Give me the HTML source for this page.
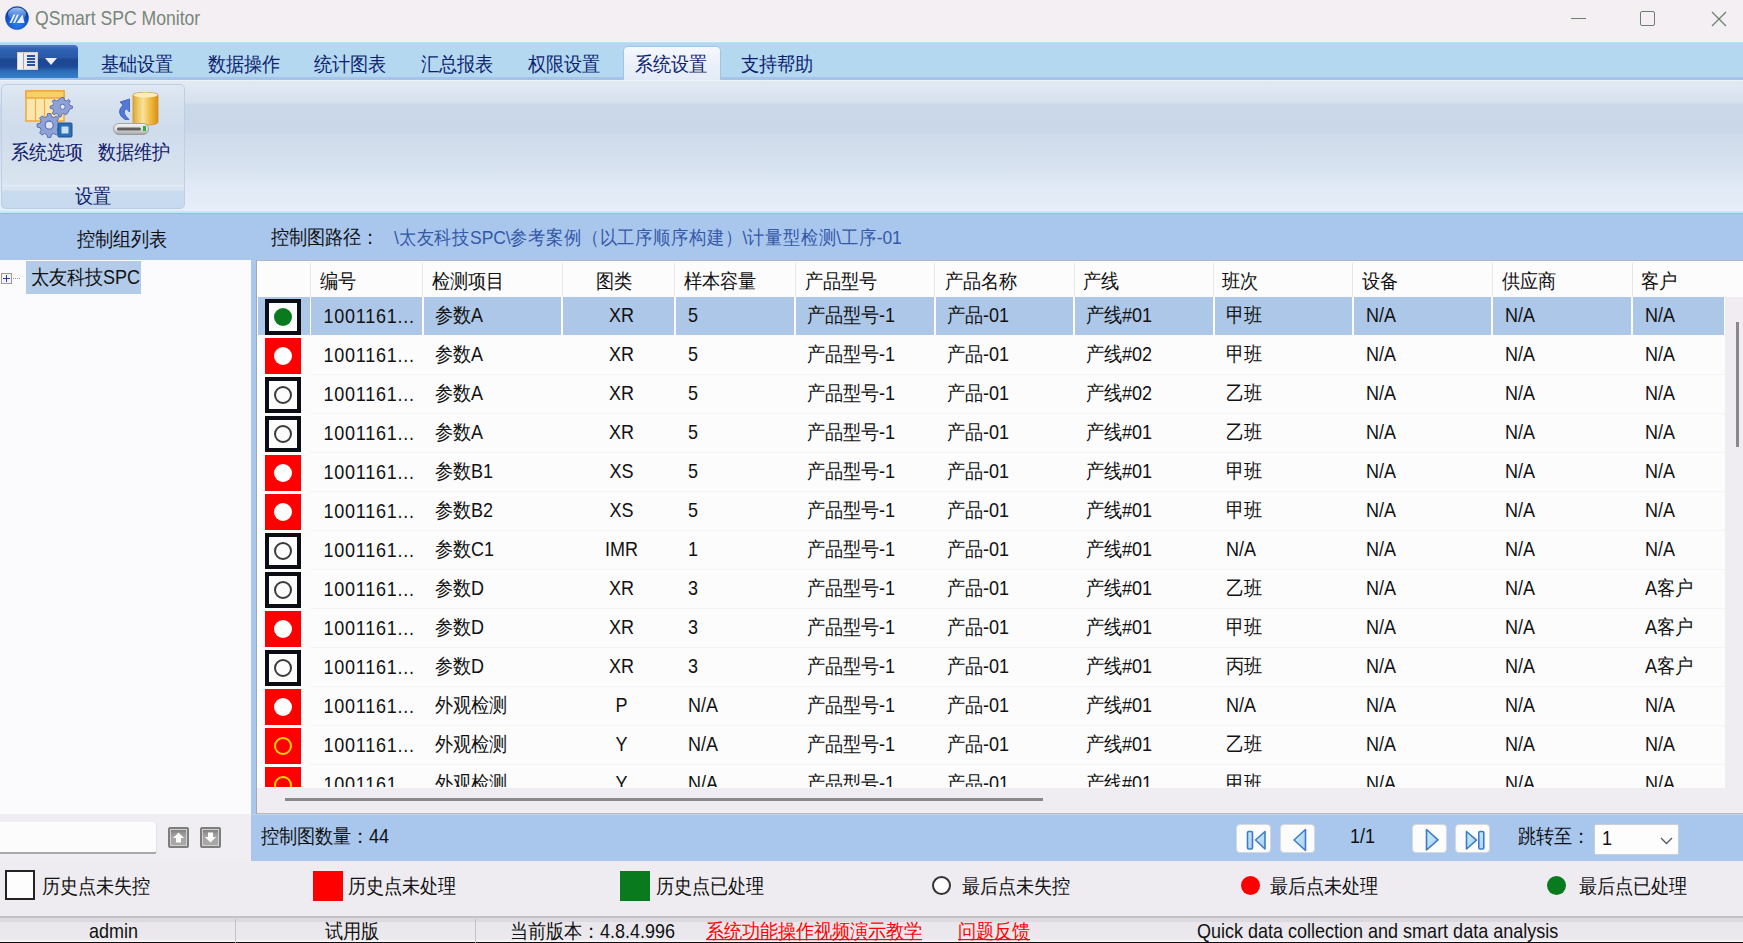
<!DOCTYPE html>
<html><head><meta charset="utf-8">
<style>
*{box-sizing:border-box}
html,body{margin:0;padding:0}
body{width:1743px;height:943px;overflow:hidden;position:relative;background:#f0eef2;font-family:"Liberation Sans",sans-serif;font-size:18px;color:#111}
.a{position:absolute}
.t{position:absolute;white-space:nowrap;line-height:20px;transform:scaleY(1.1);transform-origin:0 82%}
#title{left:0;top:0;width:1743px;height:42px;background:#f3eff3}
#menubar{left:0;top:42px;width:1743px;height:38px;background:#b4d8f0;border-top:1px solid #b2e6f4}
#menubar .bot{left:0;top:34px;width:1743px;height:3px;background:#a7c3ea}
.tab{color:#0e1f70;top:12px}
#ribbon{left:0;top:80px;width:1743px;height:133px;background:linear-gradient(#edf2f9 0px,#edf2f9 1px,#e2eaf4 1px,#d6e0ed 23px,#cbd8ea 24px,#cad7e9 53px,#cfdbeb 54px,#d8e3f0 90px,#e0e9f5 104px,#e6eef9 131px)}
#band{left:0;top:213px;width:1743px;height:47px;background:#a9c7ed;border-top:1px solid #a2b6d2}
#left{left:0;top:260px;width:251px;height:554px;background:#fbfbfd}
#split{left:251px;top:260px;width:6px;height:601px;background:#a9c7ed}
#grid{left:257px;top:260px;width:1486px;height:554px;background:#fcfcfd;overflow:hidden}
#leftbot{left:0;top:814px;width:251px;height:47px;background:#f0eef2}
#botbar{left:251px;top:814px;width:1492px;height:47px;background:#a9c7ed;border-top:1px solid #c4d2e6}
#legend{left:0;top:861px;width:1743px;height:54px;background:#efecf1}
#status{left:0;top:915px;width:1743px;height:28px;background:linear-gradient(#eeecf0 0,#eeecf0 1px,#c2c2c6 1px,#c2c2c6 3px,#dcdae0 3px,#dcdae0 7px,#e9e7eb 7px,#ebe9ed 24px,#f6f6f8 26px,#f6f6f8 27px,#0c0c0c 27px)}
</style></head><body>

<div id="title" class="a">
  <svg class="a" style="left:5px;top:6px" width="24" height="24" viewBox="0 0 24 24">
    <defs><radialGradient id="lg" cx="50%" cy="75%" r="60%"><stop offset="0" stop-color="#2a7ef0"/><stop offset="0.7" stop-color="#1458d0"/><stop offset="1" stop-color="#0a3a98"/></radialGradient>
    <linearGradient id="gl" x1="0" y1="0" x2="0" y2="1"><stop offset="0" stop-color="#b8d8ff" stop-opacity="0.9"/><stop offset="1" stop-color="#5a9af0" stop-opacity="0.3"/></linearGradient></defs>
    <circle cx="12" cy="12" r="11.6" fill="url(#lg)" stroke="#2050a0" stroke-width="0.4"/>
    <ellipse cx="12" cy="8" rx="9" ry="6.5" fill="url(#gl)"/>
    <path d="M4.5 17 L8.5 8.5 L10.5 8.5 L6.5 17Z M8 17 L12 8.5 L14 8.5 L10 17Z M11.5 17 L17.5 8.5 L19.5 17Z" fill="#f0f6ff" opacity="0.95"/>
  </svg>
  <div class="t" style="left:35px;top:9px;color:#778777;font-size:17.6px">QSmart SPC Monitor</div>
  <div class="a" style="left:1571px;top:18px;width:15px;height:1px;background:#6f7f6f"></div>
  <div class="a" style="left:1640px;top:11px;width:15px;height:15px;border:1.5px solid #6f7f6f;border-radius:2px"></div>
  <svg class="a" style="left:1711px;top:11px" width="16" height="16" viewBox="0 0 16 16"><path d="M1 1L15 15M15 1L1 15" stroke="#6f7f6f" stroke-width="1.3"/></svg>
</div>

<div id="menubar" class="a">
  <div class="a bot"></div>
  <div class="a" style="left:0;top:2px;width:78px;height:33px;border-radius:0 4px 0 0;background:linear-gradient(#4a7cc8 0,#2f62b4 4px,#2a5aa8 12px,#1c4690 15px,#1e4c98 22px,#2c6cb8 26px,#3480c8 33px)"></div>
  <div class="a" style="left:17px;top:9px;width:21px;height:18px;background:linear-gradient(90deg,#f4f4f4,#e0e0e0);border:1px solid #d0d0d0"></div>
  <div class="a" style="left:23px;top:10px;width:1px;height:16px;background:#9aa8c0"></div>
  <div class="a" style="left:27px;top:12px;width:8px;height:2px;background:#2850a0;box-shadow:0 3px 0 #2850a0,0 6px 0 #2850a0,0 9px 0 #2850a0"></div>
  <svg class="a" style="left:45px;top:15px" width="12" height="7" viewBox="0 0 12 7"><path d="M0 0H12L6 7Z" fill="#f0f0f0"/></svg>
  <div class="a" style="left:623px;top:3px;width:98px;height:35px;border:1px solid #a6c2ea;border-bottom:none;border-radius:5px 5px 0 0;background:linear-gradient(#f6f9fe 0,#eef3fb 10px,#e3ebf7 100%)"></div>
  <div class="t tab" style="left:101px">基础设置</div>
  <div class="t tab" style="left:208px">数据操作</div>
  <div class="t tab" style="left:314px">统计图表</div>
  <div class="t tab" style="left:421px">汇总报表</div>
  <div class="t tab" style="left:528px">权限设置</div>
  <div class="t tab" style="left:635px">系统设置</div>
  <div class="t tab" style="left:741px">支持帮助</div>
</div>

<div id="ribbon" class="a">
  <div class="a" style="left:1px;top:4px;width:184px;height:125px;border:1px solid #bccfe6;border-radius:5px;background:linear-gradient(#dfe8f3 0,#d5e0ee 25px,#cfdcec 45px,#d6e1ee 80px,#dae5f1 105px,#c9dbee 106px,#c6d9ee 100%)"></div>
  <div class="a" style="left:2px;top:105px;width:182px;height:1px;background:#e4ecf6"></div>
  <svg class="a" style="left:25px;top:10px" width="48" height="49" viewBox="0 0 48 49">
    <rect x="1" y="1" width="38" height="30" fill="#fbe7ad" stroke="#f0a838" stroke-width="1.5"/>
    <rect x="1" y="1" width="38" height="7" fill="#f8cf6a" stroke="#f0a838" stroke-width="1.5"/>
    <path d="M10.5 8V31M19.5 8V31" stroke="#f0b048" stroke-width="1.2"/>
    <g fill="#8ea2d8" stroke="#5d6eb2" stroke-width="1">
      <path id="g1" d="M36.6 7.5l2.2 0 .6 2.6 2 .9 2.3-1.4 1.6 1.6-1.4 2.3.9 2 2.6.6v2.2l-2.6.6-.9 2-1.4 2.3-1.6 1.6-2.3-1.4-2 .9-.6 2.6h-2.2l-.6-2.6-2-.9-2.3 1.4-1.6-1.6 1.4-2.3-.9-2-2.6-.6v-2.2l2.6-.6.9-2-1.4-2.3 1.6-1.6 2.3 1.4 2-.9z"/>
    </g>
    <circle cx="37.6" cy="16.8" r="2.6" fill="#dfe6f2" stroke="#5d6eb2" stroke-width="1"/>
    <g fill="#8ea2d8" stroke="#5d6eb2" stroke-width="1">
      <path d="M22.6 23.5h3.2l.7 3 2.4 1 2.6-1.6 2.3 2.3-1.6 2.6 1 2.4 3 .7v3.2l-3 .7-1 2.4 1.6 2.6-2.3 2.3-2.6-1.6-2.4 1-.7 3h-3.2l-.7-3-2.4-1-2.6 1.6-2.3-2.3 1.6-2.6-1-2.4-3-.7v-3.2l3-.7 1-2.4-1.6-2.6 2.3-2.3 2.6 1.6 2.4-1z"/>
    </g>
    <circle cx="24.2" cy="35.2" r="4" fill="#dfe6f2" stroke="#5d6eb2" stroke-width="1.2"/>
    <rect x="33" y="33" width="14" height="14" rx="1" fill="#2b6fb8" stroke="#1d5090" stroke-width="1"/>
    <rect x="36.5" y="36.5" width="7" height="7" fill="#c8e0f4"/>
  </svg>
  <svg class="a" style="left:112px;top:11px" width="48" height="46" viewBox="0 0 48 46">
    <defs><linearGradient id="cyl" x1="0" x2="1"><stop offset="0" stop-color="#e0a830"/><stop offset="0.4" stop-color="#f8e49a"/><stop offset="0.7" stop-color="#f0b840"/><stop offset="1" stop-color="#d89018"/></linearGradient>
    <linearGradient id="drv" x1="0" y1="0" x2="0" y2="1"><stop offset="0" stop-color="#f4f4f4"/><stop offset="0.6" stop-color="#d8d8d8"/><stop offset="1" stop-color="#a0a0a0"/></linearGradient></defs>
    <path d="M21 4Q21 1.5 33.5 1.5Q46 1.5 46 4V31Q46 34 33.5 34Q21 34 21 31Z" fill="url(#cyl)" stroke="#d09020" stroke-width="0.8"/>
    <ellipse cx="33.5" cy="4" rx="12" ry="2.5" fill="#fbeebb"/>
    <path d="M17.5 8V21L14 17.5Q9.5 22 17 28.5H13Q3 22 11 14L8 11Z" fill="#5578d8" stroke="#3050b0" stroke-width="0.7" stroke-linejoin="round"/>
    <rect x="1.5" y="32.5" width="35" height="11" rx="5.5" fill="url(#drv)" stroke="#909090" stroke-width="0.8"/>
    <rect x="5" y="36.5" width="24" height="3" rx="1.5" fill="#606060"/>
    <rect x="31" y="35" width="3" height="5" fill="#30b030"/>
  </svg>
  <div class="t" style="left:11px;top:63px;color:#10206a">系统选项</div>
  <div class="t" style="left:98px;top:63px;color:#10206a">数据维护</div>
  <div class="t" style="left:75px;top:107px;color:#10206a">设置</div>
  <div class="a" style="left:0;top:131px;width:1743px;height:2px;background:#b8ecf6"></div>
</div>
<div id="band" class="a">
  <div class="t" style="left:77px;top:16px;color:#111">控制组列表</div>
  <div class="t" style="left:271px;top:14px;color:#111">控制图路径：</div>
  <div class="t" style="left:394px;top:14px;color:#3458a8;font-size:17.5px;letter-spacing:-0.15px">\太友科技SPC\参考案例（以工序顺序构建）\计量型检测\工序-01</div>
</div>
<div id="left" class="a">
  <div class="a" style="left:1px;top:13px;width:11px;height:11px;border:1px solid #9a9a9a;background:#f4f4f4"></div>
  <div class="a" style="left:3px;top:18px;width:7px;height:1px;background:#2040a0"></div>
  <div class="a" style="left:6px;top:15px;width:1px;height:7px;background:#2040a0"></div>
  <div class="a" style="left:13px;top:18px;width:7px;height:0;border-top:1px dotted #999"></div>
  <div class="a" style="left:26px;top:1px;width:115px;height:33px;background:#b2cbe9"></div>
  <div class="t" style="left:31px;top:8px;color:#111">太友科技SPC</div>
</div>
<div id="split" class="a"><div class="a" style="left:5px;top:0;width:1px;height:554px;background:#a4a8b4"></div></div>
<div id="grid" class="a">
<div class="a" style="left:0;top:0;width:1486px;height:1px;background:#b4b8c4"></div>
<div class="a" style="left:52.5px;top:3px;width:1px;height:34px;background:#e6e6ea"></div>
<div class="a" style="left:165.0px;top:3px;width:1px;height:34px;background:#e6e6ea"></div>
<div class="a" style="left:304.5px;top:3px;width:1px;height:34px;background:#e6e6ea"></div>
<div class="a" style="left:417.0px;top:3px;width:1px;height:34px;background:#e6e6ea"></div>
<div class="a" style="left:537.5px;top:3px;width:1px;height:34px;background:#e6e6ea"></div>
<div class="a" style="left:677.0px;top:3px;width:1px;height:34px;background:#e6e6ea"></div>
<div class="a" style="left:816.5px;top:3px;width:1px;height:34px;background:#e6e6ea"></div>
<div class="a" style="left:956.0px;top:3px;width:1px;height:34px;background:#e6e6ea"></div>
<div class="a" style="left:1095.0px;top:3px;width:1px;height:34px;background:#e6e6ea"></div>
<div class="a" style="left:1234.5px;top:3px;width:1px;height:34px;background:#e6e6ea"></div>
<div class="a" style="left:1374.5px;top:3px;width:1px;height:34px;background:#e6e6ea"></div>
<div class="t" style="left:63px;top:12px">编号</div>
<div class="t" style="left:175px;top:12px">检测项目</div>
<div class="t" style="left:339px;top:12px">图类</div>
<div class="t" style="left:427px;top:12px">样本容量</div>
<div class="t" style="left:548px;top:12px">产品型号</div>
<div class="t" style="left:688px;top:12px">产品名称</div>
<div class="t" style="left:826px;top:12px">产线</div>
<div class="t" style="left:965px;top:12px">班次</div>
<div class="t" style="left:1105px;top:12px">设备</div>
<div class="t" style="left:1245px;top:12px">供应商</div>
<div class="t" style="left:1384px;top:12px">客户</div>
<div class="a" style="left:0;top:37px;width:1468px;height:490px;overflow:hidden">
<div class="a" style="left:1.0px;top:0px;width:51.5px;height:38px;background:#adc7e8"></div>
<div class="a" style="left:54.0px;top:0px;width:110.5px;height:38px;background:#adc7e8"></div>
<div class="a" style="left:166.5px;top:0px;width:137.5px;height:38px;background:#adc7e8"></div>
<div class="a" style="left:306.0px;top:0px;width:110.5px;height:38px;background:#adc7e8"></div>
<div class="a" style="left:418.5px;top:0px;width:118.5px;height:38px;background:#adc7e8"></div>
<div class="a" style="left:539.0px;top:0px;width:137.5px;height:38px;background:#adc7e8"></div>
<div class="a" style="left:678.5px;top:0px;width:137.5px;height:38px;background:#adc7e8"></div>
<div class="a" style="left:818.0px;top:0px;width:137.5px;height:38px;background:#adc7e8"></div>
<div class="a" style="left:957.5px;top:0px;width:137.0px;height:38px;background:#adc7e8"></div>
<div class="a" style="left:1096.5px;top:0px;width:137.5px;height:38px;background:#adc7e8"></div>
<div class="a" style="left:1236.0px;top:0px;width:138.0px;height:38px;background:#adc7e8"></div>
<div class="a" style="left:1376.0px;top:0px;width:91.0px;height:38px;background:#adc7e8"></div>
<div class="a" style="left:8px;top:2px;width:36px;height:36px;border:4px solid #0c0c14;background:#fdfdfd"></div>
<div class="a" style="left:17px;top:11px;width:18px;height:18px;border-radius:50%;background:#0a7a1e"></div>
<div class="t" style="left:66.5px;top:10px;letter-spacing:0.75px">1001161...</div>
<div class="t" style="left:178px;top:9px">参数A</div>
<div class="t" style="left:314px;width:101px;text-align:center;top:9px">XR</div>
<div class="t" style="left:431px;top:9px">5</div>
<div class="t" style="left:550px;top:9px">产品型号-1</div>
<div class="t" style="left:690px;top:9px">产品-01</div>
<div class="t" style="left:829px;top:9px">产线#01</div>
<div class="t" style="left:969px;top:9px">甲班</div>
<div class="t" style="left:1109px;top:9px">N/A</div>
<div class="t" style="left:1248px;top:9px">N/A</div>
<div class="t" style="left:1388px;top:9px">N/A</div>
<div class="a" style="left:53px;top:77px;width:1415px;height:1px;background:#f5f5f7"></div>
<div class="a" style="left:8px;top:41px;width:36px;height:36px;background:#fe0000"></div>
<div class="a" style="left:17px;top:50px;width:18px;height:18px;border-radius:50%;background:#fff"></div>
<div class="t" style="left:66.5px;top:49px;letter-spacing:0.75px">1001161...</div>
<div class="t" style="left:178px;top:48px">参数A</div>
<div class="t" style="left:314px;width:101px;text-align:center;top:48px">XR</div>
<div class="t" style="left:431px;top:48px">5</div>
<div class="t" style="left:550px;top:48px">产品型号-1</div>
<div class="t" style="left:690px;top:48px">产品-01</div>
<div class="t" style="left:829px;top:48px">产线#02</div>
<div class="t" style="left:969px;top:48px">甲班</div>
<div class="t" style="left:1109px;top:48px">N/A</div>
<div class="t" style="left:1248px;top:48px">N/A</div>
<div class="t" style="left:1388px;top:48px">N/A</div>
<div class="a" style="left:53px;top:116px;width:1415px;height:1px;background:#f5f5f7"></div>
<div class="a" style="left:8px;top:80px;width:36px;height:36px;border:4px solid #0c0c14;background:#fdfdfd"></div>
<div class="a" style="left:17px;top:89px;width:18px;height:18px;border-radius:50%;border:2px solid #3a3a3a"></div>
<div class="t" style="left:66.5px;top:88px;letter-spacing:0.75px">1001161...</div>
<div class="t" style="left:178px;top:87px">参数A</div>
<div class="t" style="left:314px;width:101px;text-align:center;top:87px">XR</div>
<div class="t" style="left:431px;top:87px">5</div>
<div class="t" style="left:550px;top:87px">产品型号-1</div>
<div class="t" style="left:690px;top:87px">产品-01</div>
<div class="t" style="left:829px;top:87px">产线#02</div>
<div class="t" style="left:969px;top:87px">乙班</div>
<div class="t" style="left:1109px;top:87px">N/A</div>
<div class="t" style="left:1248px;top:87px">N/A</div>
<div class="t" style="left:1388px;top:87px">N/A</div>
<div class="a" style="left:53px;top:155px;width:1415px;height:1px;background:#f5f5f7"></div>
<div class="a" style="left:8px;top:119px;width:36px;height:36px;border:4px solid #0c0c14;background:#fdfdfd"></div>
<div class="a" style="left:17px;top:128px;width:18px;height:18px;border-radius:50%;border:2px solid #3a3a3a"></div>
<div class="t" style="left:66.5px;top:127px;letter-spacing:0.75px">1001161...</div>
<div class="t" style="left:178px;top:126px">参数A</div>
<div class="t" style="left:314px;width:101px;text-align:center;top:126px">XR</div>
<div class="t" style="left:431px;top:126px">5</div>
<div class="t" style="left:550px;top:126px">产品型号-1</div>
<div class="t" style="left:690px;top:126px">产品-01</div>
<div class="t" style="left:829px;top:126px">产线#01</div>
<div class="t" style="left:969px;top:126px">乙班</div>
<div class="t" style="left:1109px;top:126px">N/A</div>
<div class="t" style="left:1248px;top:126px">N/A</div>
<div class="t" style="left:1388px;top:126px">N/A</div>
<div class="a" style="left:53px;top:194px;width:1415px;height:1px;background:#f5f5f7"></div>
<div class="a" style="left:8px;top:158px;width:36px;height:36px;background:#fe0000"></div>
<div class="a" style="left:17px;top:167px;width:18px;height:18px;border-radius:50%;background:#fff"></div>
<div class="t" style="left:66.5px;top:166px;letter-spacing:0.75px">1001161...</div>
<div class="t" style="left:178px;top:165px">参数B1</div>
<div class="t" style="left:314px;width:101px;text-align:center;top:165px">XS</div>
<div class="t" style="left:431px;top:165px">5</div>
<div class="t" style="left:550px;top:165px">产品型号-1</div>
<div class="t" style="left:690px;top:165px">产品-01</div>
<div class="t" style="left:829px;top:165px">产线#01</div>
<div class="t" style="left:969px;top:165px">甲班</div>
<div class="t" style="left:1109px;top:165px">N/A</div>
<div class="t" style="left:1248px;top:165px">N/A</div>
<div class="t" style="left:1388px;top:165px">N/A</div>
<div class="a" style="left:53px;top:233px;width:1415px;height:1px;background:#f5f5f7"></div>
<div class="a" style="left:8px;top:197px;width:36px;height:36px;background:#fe0000"></div>
<div class="a" style="left:17px;top:206px;width:18px;height:18px;border-radius:50%;background:#fff"></div>
<div class="t" style="left:66.5px;top:205px;letter-spacing:0.75px">1001161...</div>
<div class="t" style="left:178px;top:204px">参数B2</div>
<div class="t" style="left:314px;width:101px;text-align:center;top:204px">XS</div>
<div class="t" style="left:431px;top:204px">5</div>
<div class="t" style="left:550px;top:204px">产品型号-1</div>
<div class="t" style="left:690px;top:204px">产品-01</div>
<div class="t" style="left:829px;top:204px">产线#01</div>
<div class="t" style="left:969px;top:204px">甲班</div>
<div class="t" style="left:1109px;top:204px">N/A</div>
<div class="t" style="left:1248px;top:204px">N/A</div>
<div class="t" style="left:1388px;top:204px">N/A</div>
<div class="a" style="left:53px;top:272px;width:1415px;height:1px;background:#f5f5f7"></div>
<div class="a" style="left:8px;top:236px;width:36px;height:36px;border:4px solid #0c0c14;background:#fdfdfd"></div>
<div class="a" style="left:17px;top:245px;width:18px;height:18px;border-radius:50%;border:2px solid #3a3a3a"></div>
<div class="t" style="left:66.5px;top:244px;letter-spacing:0.75px">1001161...</div>
<div class="t" style="left:178px;top:243px">参数C1</div>
<div class="t" style="left:314px;width:101px;text-align:center;top:243px">IMR</div>
<div class="t" style="left:431px;top:243px">1</div>
<div class="t" style="left:550px;top:243px">产品型号-1</div>
<div class="t" style="left:690px;top:243px">产品-01</div>
<div class="t" style="left:829px;top:243px">产线#01</div>
<div class="t" style="left:969px;top:243px">N/A</div>
<div class="t" style="left:1109px;top:243px">N/A</div>
<div class="t" style="left:1248px;top:243px">N/A</div>
<div class="t" style="left:1388px;top:243px">N/A</div>
<div class="a" style="left:53px;top:311px;width:1415px;height:1px;background:#f5f5f7"></div>
<div class="a" style="left:8px;top:275px;width:36px;height:36px;border:4px solid #0c0c14;background:#fdfdfd"></div>
<div class="a" style="left:17px;top:284px;width:18px;height:18px;border-radius:50%;border:2px solid #3a3a3a"></div>
<div class="t" style="left:66.5px;top:283px;letter-spacing:0.75px">1001161...</div>
<div class="t" style="left:178px;top:282px">参数D</div>
<div class="t" style="left:314px;width:101px;text-align:center;top:282px">XR</div>
<div class="t" style="left:431px;top:282px">3</div>
<div class="t" style="left:550px;top:282px">产品型号-1</div>
<div class="t" style="left:690px;top:282px">产品-01</div>
<div class="t" style="left:829px;top:282px">产线#01</div>
<div class="t" style="left:969px;top:282px">乙班</div>
<div class="t" style="left:1109px;top:282px">N/A</div>
<div class="t" style="left:1248px;top:282px">N/A</div>
<div class="t" style="left:1388px;top:282px">A客户</div>
<div class="a" style="left:53px;top:350px;width:1415px;height:1px;background:#f5f5f7"></div>
<div class="a" style="left:8px;top:314px;width:36px;height:36px;background:#fe0000"></div>
<div class="a" style="left:17px;top:323px;width:18px;height:18px;border-radius:50%;background:#fff"></div>
<div class="t" style="left:66.5px;top:322px;letter-spacing:0.75px">1001161...</div>
<div class="t" style="left:178px;top:321px">参数D</div>
<div class="t" style="left:314px;width:101px;text-align:center;top:321px">XR</div>
<div class="t" style="left:431px;top:321px">3</div>
<div class="t" style="left:550px;top:321px">产品型号-1</div>
<div class="t" style="left:690px;top:321px">产品-01</div>
<div class="t" style="left:829px;top:321px">产线#01</div>
<div class="t" style="left:969px;top:321px">甲班</div>
<div class="t" style="left:1109px;top:321px">N/A</div>
<div class="t" style="left:1248px;top:321px">N/A</div>
<div class="t" style="left:1388px;top:321px">A客户</div>
<div class="a" style="left:53px;top:389px;width:1415px;height:1px;background:#f5f5f7"></div>
<div class="a" style="left:8px;top:353px;width:36px;height:36px;border:4px solid #0c0c14;background:#fdfdfd"></div>
<div class="a" style="left:17px;top:362px;width:18px;height:18px;border-radius:50%;border:2px solid #3a3a3a"></div>
<div class="t" style="left:66.5px;top:361px;letter-spacing:0.75px">1001161...</div>
<div class="t" style="left:178px;top:360px">参数D</div>
<div class="t" style="left:314px;width:101px;text-align:center;top:360px">XR</div>
<div class="t" style="left:431px;top:360px">3</div>
<div class="t" style="left:550px;top:360px">产品型号-1</div>
<div class="t" style="left:690px;top:360px">产品-01</div>
<div class="t" style="left:829px;top:360px">产线#01</div>
<div class="t" style="left:969px;top:360px">丙班</div>
<div class="t" style="left:1109px;top:360px">N/A</div>
<div class="t" style="left:1248px;top:360px">N/A</div>
<div class="t" style="left:1388px;top:360px">A客户</div>
<div class="a" style="left:53px;top:428px;width:1415px;height:1px;background:#f5f5f7"></div>
<div class="a" style="left:8px;top:392px;width:36px;height:36px;background:#fe0000"></div>
<div class="a" style="left:17px;top:401px;width:18px;height:18px;border-radius:50%;background:#fff"></div>
<div class="t" style="left:66.5px;top:400px;letter-spacing:0.75px">1001161...</div>
<div class="t" style="left:178px;top:399px">外观检测</div>
<div class="t" style="left:314px;width:101px;text-align:center;top:399px">P</div>
<div class="t" style="left:431px;top:399px">N/A</div>
<div class="t" style="left:550px;top:399px">产品型号-1</div>
<div class="t" style="left:690px;top:399px">产品-01</div>
<div class="t" style="left:829px;top:399px">产线#01</div>
<div class="t" style="left:969px;top:399px">N/A</div>
<div class="t" style="left:1109px;top:399px">N/A</div>
<div class="t" style="left:1248px;top:399px">N/A</div>
<div class="t" style="left:1388px;top:399px">N/A</div>
<div class="a" style="left:53px;top:467px;width:1415px;height:1px;background:#f5f5f7"></div>
<div class="a" style="left:8px;top:431px;width:36px;height:36px;background:#fe0000"></div>
<div class="a" style="left:17px;top:440px;width:18px;height:18px;border-radius:50%;border:2px solid #fad400"></div>
<div class="t" style="left:66.5px;top:439px;letter-spacing:0.75px">1001161...</div>
<div class="t" style="left:178px;top:438px">外观检测</div>
<div class="t" style="left:314px;width:101px;text-align:center;top:438px">Y</div>
<div class="t" style="left:431px;top:438px">N/A</div>
<div class="t" style="left:550px;top:438px">产品型号-1</div>
<div class="t" style="left:690px;top:438px">产品-01</div>
<div class="t" style="left:829px;top:438px">产线#01</div>
<div class="t" style="left:969px;top:438px">乙班</div>
<div class="t" style="left:1109px;top:438px">N/A</div>
<div class="t" style="left:1248px;top:438px">N/A</div>
<div class="t" style="left:1388px;top:438px">N/A</div>
<div class="a" style="left:53px;top:506px;width:1415px;height:1px;background:#f5f5f7"></div>
<div class="a" style="left:8px;top:470px;width:36px;height:36px;background:#fe0000"></div>
<div class="a" style="left:17px;top:479px;width:18px;height:18px;border-radius:50%;border:2px solid #fad400"></div>
<div class="t" style="left:66.5px;top:478px;letter-spacing:0.75px">1001161...</div>
<div class="t" style="left:178px;top:477px">外观检测</div>
<div class="t" style="left:314px;width:101px;text-align:center;top:477px">Y</div>
<div class="t" style="left:431px;top:477px">N/A</div>
<div class="t" style="left:550px;top:477px">产品型号-1</div>
<div class="t" style="left:690px;top:477px">产品-01</div>
<div class="t" style="left:829px;top:477px">产线#01</div>
<div class="t" style="left:969px;top:477px">甲班</div>
<div class="t" style="left:1109px;top:477px">N/A</div>
<div class="t" style="left:1248px;top:477px">N/A</div>
<div class="t" style="left:1388px;top:477px">N/A</div>
</div>
<div class="a" style="left:1468px;top:37px;width:18px;height:491px;background:#efedf1"></div>
<div class="a" style="left:1479px;top:62px;width:3px;height:125px;background:#8a8a8a"></div>
<div class="a" style="left:0;top:528px;width:1486px;height:25px;background:#f0edf2"></div>
<div class="a" style="left:28px;top:538px;width:758px;height:3px;background:#8a8a8a"></div>
<div class="a" style="left:0;top:553px;width:1486px;height:1px;background:#b8b8c0"></div>
</div>
<div id="leftbot" class="a">
  <div class="a" style="left:0;top:8px;width:157px;height:32px;background:#fdfcfd;border-bottom:2px solid #a8a8ac;border-right:1px solid #e4e4e8;border-radius:0 3px 3px 0"></div>
  <div class="a" style="left:168px;top:13px;width:21px;height:21px;border:2px solid #7e7e7e;border-radius:2px;background:linear-gradient(#7c7c7c,#a6a6a6 45%,#a8a8a8);box-shadow:inset 0 0 0 1px #d0d0d0"></div>
  <svg class="a" style="left:172px;top:17px" width="13" height="13" viewBox="0 0 13 13"><path d="M6.5 1.5L12 7H9V11.5H4V7H1Z" fill="#fff"/></svg>
  <div class="a" style="left:200px;top:13px;width:21px;height:21px;border:2px solid #7e7e7e;border-radius:2px;background:linear-gradient(#7c7c7c,#a6a6a6 45%,#a8a8a8);box-shadow:inset 0 0 0 1px #d0d0d0"></div>
  <svg class="a" style="left:204px;top:17px" width="13" height="13" viewBox="0 0 13 13"><path d="M6.5 11.5L12 6H9V1.5H4V6H1Z" fill="#fff"/></svg>
</div>
<div id="botbar" class="a">
  <div class="t" style="left:10px;top:12px;color:#111">控制图数量：44</div>
  <div class="a" style="left:985px;top:9px;width:35px;height:29px;border:1px solid #d4d8e0;border-radius:4px;background:#fcfcfd"></div><div class="a" style="left:1029px;top:9px;width:35px;height:29px;border:1px solid #d4d8e0;border-radius:4px;background:#fcfcfd"></div><div class="a" style="left:1161px;top:9px;width:35px;height:29px;border:1px solid #d4d8e0;border-radius:4px;background:#fcfcfd"></div><div class="a" style="left:1204px;top:9px;width:35px;height:29px;border:1px solid #d4d8e0;border-radius:4px;background:#fcfcfd"></div>
  <svg class="a" style="left:0;top:0" width="1492" height="47" viewBox="0 0 1492 47">
  <defs><linearGradient id="pg" x1="0" y1="0" x2="1" y2="1"><stop offset="0" stop-color="#c8ecf8"/><stop offset="1" stop-color="#a8d0f0"/></linearGradient></defs>
  <g fill="url(#pg)" stroke="#3f7cc8" stroke-width="1.6" stroke-linejoin="round">
    <rect x="996.5" y="16.5" width="5" height="17.5" rx="1.2"/>
    <path d="M1004.5 25L1014 16.5V34Z"/>
    <path d="M1043 25L1054.5 14.5V35.5Z"/>
    <path d="M1175.5 14.5V35L1187 24.8Z"/>
    <path d="M1215.5 16.5V34L1225.5 25.2Z"/>
    <rect x="1227.8" y="16.5" width="5" height="17.5" rx="1.2"/>
  </g>
</svg>
  <div class="t" style="left:1099px;top:12px;color:#111">1/1</div>
  <div class="t" style="left:1267px;top:12px;color:#111">跳转至：</div>
  <div class="a" style="left:1343px;top:9px;width:85px;height:31px;background:#fdfdfd;border:1px solid #c4cedc;border-radius:2px"></div>
  <div class="t" style="left:1351px;top:14px;color:#111">1</div>
  <svg class="a" style="left:1409px;top:22px" width="13" height="8" viewBox="0 0 13 8"><path d="M1 1L6.5 6.5L12 1" fill="none" stroke="#505860" stroke-width="1.3"/></svg>
</div>
<div id="legend" class="a">
  <div class="a" style="left:5px;top:9px;width:30px;height:30px;border:2px solid #222;background:#fdfdfd"></div>
  <div class="t" style="left:42px;top:16px">历史点未失控</div>
  <div class="a" style="left:313px;top:10px;width:30px;height:30px;background:#fe0000"></div>
  <div class="t" style="left:348px;top:16px">历史点未处理</div>
  <div class="a" style="left:620px;top:10px;width:30px;height:30px;background:#0a7a1e"></div>
  <div class="t" style="left:656px;top:16px">历史点已处理</div>
  <div class="a" style="left:931.5px;top:15px;width:19px;height:19px;border-radius:50%;border:2px solid #333;background:#fdfdfd"></div>
  <div class="t" style="left:962px;top:16px">最后点未失控</div>
  <div class="a" style="left:1241px;top:15px;width:19px;height:19px;border-radius:50%;background:#fe0000"></div>
  <div class="t" style="left:1270px;top:16px">最后点未处理</div>
  <div class="a" style="left:1547px;top:15px;width:19px;height:19px;border-radius:50%;background:#0a7a1e"></div>
  <div class="t" style="left:1579px;top:16px">最后点已处理</div>
</div>
<div id="status" class="a">
  <div class="t" style="left:89px;top:7px">admin</div>
  <div class="a" style="left:235px;top:4px;width:1px;height:24px;background:#c4c4c8"></div>
  <div class="t" style="left:325px;top:7px">试用版</div>
  <div class="a" style="left:475px;top:4px;width:1px;height:24px;background:#c4c4c8"></div>
  <div class="t" style="left:510px;top:7px">当前版本：4.8.4.996</div>
  <div class="t" style="left:706px;top:7px;color:#f00;text-decoration:underline">系统功能操作视频演示教学</div>
  <div class="t" style="left:958px;top:7px;color:#f00;text-decoration:underline">问题反馈</div>
  <div class="t" style="left:1197px;top:7px">Quick data collection and smart data analysis</div>
</div>

</body></html>
